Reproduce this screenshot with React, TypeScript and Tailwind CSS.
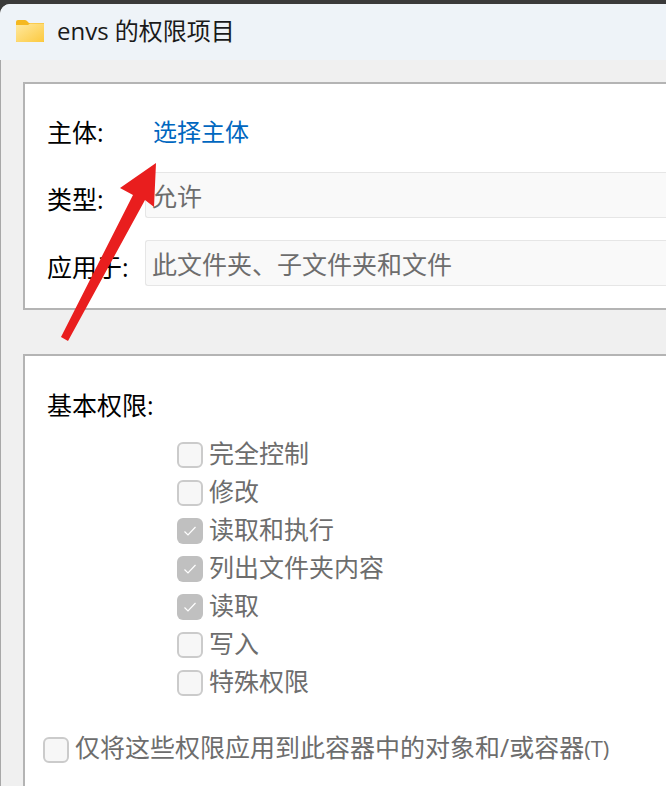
import React from 'react';

const font = 'font-["Open_Sans","Noto_Sans_CJK_SC",sans-serif]';

const permissions = [
  { label: '完全控制', checked: false },
  { label: '修改', checked: false },
  { label: '读取和执行', checked: true },
  { label: '列出文件夹内容', checked: true },
  { label: '读取', checked: true },
  { label: '写入', checked: false },
  { label: '特殊权限', checked: false },
];

const Checkbox: React.FC<{ checked?: boolean }> = ({ checked }) =>
  checked ? (
    <span className="w-[26px] h-[26px] shrink-0 rounded-[6px] bg-[#c0c0c0] flex items-center justify-center">
      <svg width="14" height="12" viewBox="0 0 14 12" fill="none" stroke="#ffffff" strokeWidth="1.2">
        <path d="M1.5 6.5 L5 10 L12.5 2" />
      </svg>
    </span>
  ) : (
    <span className="w-[26px] h-[26px] shrink-0 rounded-[6px] bg-[#f7f7f7] border-2 border-[#cbcbcb]" />
  );

const Field: React.FC<{ text: string }> = ({ text }) => (
  <div className="flex-1 h-[46px] bg-[#f9f9f9] border border-[#e6e6e6] rounded-l-[3px] border-r-0 pl-[6px] pt-[3px] flex items-center text-[25px] text-[#6d6d6d] whitespace-nowrap">
    {text}
  </div>
);

export default function App() {
  return (
    <div className={`relative w-[666px] h-[786px] overflow-hidden bg-[#3a3a3a] ${font}`}>
      <div className="mt-[4px] h-[782px] rounded-tl-[10px] overflow-hidden bg-[#f0f0f0] flex flex-col">
        {/* Title bar */}
        <div className="h-[56px] shrink-0 bg-[#eef3f8] flex items-center pl-[16px] gap-[13px]">
          <svg width="28" height="22" viewBox="0 0 28 22" className="mt-[-3px]">
            <path d="M0 2 Q0 0 2 0 H9 Q10.5 0 11.5 1.5 L13 3 H28 V22 H1 Q0 22 0 21 Z" fill="#f5b81f" />
            <path d="M0 5 H12 L14 3.5 H28 V21 Q28 22 27 22 H1 Q0 22 0 21 Z" fill="url(#folder)" />
            <defs>
              <linearGradient id="folder" x1="0" y1="0" x2="1" y2="1">
                <stop offset="0" stopColor="#ffe9a0" />
                <stop offset="1" stopColor="#fcc93f" />
              </linearGradient>
            </defs>
          </svg>
          <span className="text-[24px] leading-none text-[#1a1a1a] mt-[-2px]">envs 的权限项目</span>
        </div>

        <div className="flex-1 pt-[22px] pl-[22px] border-l border-[#a8a8a8]">
          {/* Principal group */}
          <div className="h-[228px] border-2 border-r-0 border-[#b4b4b4] bg-white pl-[22px]">
            <div className="flex items-center h-[46px] mt-[25px] text-[25px] text-black">
              <span className="w-[106px] mt-[2px]">主体:</span>
              <span className="text-[#0067c0] text-[24px]">选择主体</span>
            </div>
            <div className="flex items-center h-[46px] mt-[17px] text-[25px] text-black">
              <span className="w-[98px] mt-[9px]">类型:</span>
              <Field text="允许" />
            </div>
            <div className="flex items-center h-[46px] mt-[22px] text-[25px] text-black">
              <span className="w-[98px] mt-[9px] whitespace-nowrap">应用于:</span>
              <Field text="此文件夹、子文件夹和文件" />
            </div>
          </div>

          {/* Permissions group */}
          <div className="mt-[44px] h-[500px] border-2 border-r-0 border-[#b4b4b4] bg-white pl-[22px]">
            <div className="mt-[31px] text-[25px] leading-[36px] text-black">基本权限:</div>
            <div className="mt-[19px] ml-[130px] flex flex-col gap-[12px]">
              {permissions.map((p) => (
                <div key={p.label} className="flex items-center gap-[6px] h-[26px] text-[25px] text-[#6d6d6d] whitespace-nowrap">
                  <Checkbox checked={p.checked} />
                  <span className="pb-[2px]">{p.label}</span>
                </div>
              ))}
            </div>
            <div className="mt-[41px] ml-[-4px] flex items-center gap-[6px] h-[26px] text-[25px] text-[#6d6d6d] whitespace-nowrap">
              <Checkbox />
              <span className="pb-[4px]">仅将这些权限应用到此容器中的对象和/或容器<span className="text-[22px]">(T)</span></span>
            </div>
          </div>
        </div>
      </div>

      {/* Red annotation arrow */}
      <svg className="absolute left-0 top-0 pointer-events-none" width="666" height="786">
        <polygon points="156,163 120,188 133,195 61,337 68,341 145,200 154,207" fill="#e91e1e" />
      </svg>
    </div>
  );
}
